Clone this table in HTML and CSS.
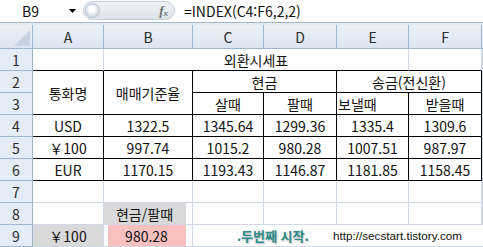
FILE: index.html
```html
<!DOCTYPE html>
<html lang="ko">
<head>
<meta charset="utf-8">
<link rel="stylesheet" href="styles.css">
</head>
<body>
<div class="fbar">
  <div class="namebox">
    <span class="ref">B9</span>
    <svg class="caret" width="7" height="4" viewBox="0 0 7 4"><path d="M0 0H7L3.5 4Z" fill="#000"/></svg>
  </div>
  <div class="pill">
    <span class="knob"></span>
    <span class="fx">f<sub>x</sub></span>
  </div>
  <div class="formula">=INDEX(C4:F6,2,2)</div>
</div>
<div class="strip"></div>
<div class="sheet">
  <div class="c ch corner"><svg width="16" height="16" viewBox="0 0 16 16"><path d="M16 0V16H0Z" fill="#c7d3e2"/></svg></div>
  <div class="c ch">A</div>
  <div class="c ch">B</div>
  <div class="c ch">C</div>
  <div class="c ch">D</div>
  <div class="c ch">E</div>
  <div class="c ch">F</div>
  <div class="c ch last"></div>

  <div class="c rh">1</div>
  <div class="c bb"></div>
  <div class="c bb span4">외환시세표</div>
  <div class="c bb"></div>
  <div class="c"></div>

  <div class="c rh">2</div>
  <div class="c t rows2">통화명</div>
  <div class="c t rows2">매매기준율</div>
  <div class="c t span2">현금</div>
  <div class="c t span2">송금(전신환)</div>
  <div class="c"></div>

  <div class="c rh">3</div>
  <div class="c t">살때</div>
  <div class="c t">팔때</div>
  <div class="c t left">보낼때</div>
  <div class="c t">받을때</div>
  <div class="c"></div>

  <div class="c rh">4</div>
  <div class="c t">USD</div>
  <div class="c t">1322.5</div>
  <div class="c t">1345.64</div>
  <div class="c t">1299.36</div>
  <div class="c t">1335.4</div>
  <div class="c t">1309.6</div>
  <div class="c"></div>

  <div class="c rh">5</div>
  <div class="c t">￥100</div>
  <div class="c t">997.74</div>
  <div class="c t">1015.2</div>
  <div class="c t">980.28</div>
  <div class="c t">1007.51</div>
  <div class="c t">987.97</div>
  <div class="c"></div>

  <div class="c rh">6</div>
  <div class="c t">EUR</div>
  <div class="c t">1170.15</div>
  <div class="c t">1193.43</div>
  <div class="c t">1146.87</div>
  <div class="c t">1181.85</div>
  <div class="c t">1158.45</div>
  <div class="c"></div>

  <div class="c rh">7</div>
  <div class="c"></div>
  <div class="c"></div>
  <div class="c"></div>
  <div class="c"></div>
  <div class="c"></div>
  <div class="c"></div>
  <div class="c"></div>

  <div class="c rh">8</div>
  <div class="c"></div>
  <div class="c label">현금/팔때</div>
  <div class="c"></div>
  <div class="c"></div>
  <div class="c"></div>
  <div class="c"></div>
  <div class="c"></div>

  <div class="c rh">9</div>
  <div class="c grayfill">￥100</div>
  <div class="c result">980.28</div>
  <div class="c mark">
    <span class="dot">.</span><span class="brand">두번째 시작.</span><span class="url">http://secstart.tistory.com</span>
  </div>
</div>
</body>
</html>
```
FILE: styles.css
```css
html, body {
  margin: 0;
  padding: 0;
}
body {
  width: 483px;
  height: 247px;
  overflow: hidden;
  background: #fff;
  font-family: "Noto Sans CJK KR", "Noto Sans", sans-serif;
  font-size: 14px;
  color: #111;
}
.fbar {
  display: flex;
  height: 22px;
  border-bottom: 1px solid #a7b8cc;
  background: #fff;
}
.namebox {
  width: 83px;
  display: flex;
  align-items: center;
  box-sizing: border-box;
  padding-left: 22px;
  padding-right: 7px;
}
.ref {
  line-height: 1;
}
.caret {
  margin-left: auto;
}
.pill {
  width: 92px;
  height: 19px;
  margin-top: 1px;
  box-sizing: border-box;
  border: 1px solid #c3cedb;
  border-radius: 10px;
  background: linear-gradient(#f1f4f8, #dbe2ea);
  display: flex;
  align-items: center;
  justify-content: space-between;
  padding: 0 6px 0 1px;
}
.knob {
  width: 15px;
  height: 15px;
  border-radius: 50%;
  background: radial-gradient(circle at 45% 40%, #ffffff 0 25%, #cfd7e1 70%, #b9c4d1 100%);
  border: 1px solid #b6c1ce;
  box-sizing: border-box;
}
.fx {
  font-family: "Liberation Serif", serif;
  font-style: italic;
  font-weight: bold;
  font-size: 13px;
  color: #6b6f75;
  line-height: 1;
}
.fx sub {
  font-size: 9px;
  vertical-align: -1px;
}
.formula {
  flex: 1;
  display: flex;
  align-items: center;
  padding-left: 9px;
  line-height: 1;
}
.strip {
  height: 2px;
  background: #e4eaf2;
}
.sheet {
  display: grid;
  grid-template-columns: 33px 71px 89px 71px 73px 72px 73px 1fr;
  grid-template-rows: 24px repeat(9, 22px);
}
.c {
  box-sizing: border-box;
  border-right: 1px solid #d0d7e5;
  border-bottom: 1px solid #d0d7e5;
  display: flex;
  align-items: center;
  justify-content: center;
  white-space: nowrap;
  line-height: 1;
  min-width: 0;
  overflow: visible;
}
.ch {
  background: linear-gradient(#eaf0f8, #dbe5f1);
  border-right-color: #9eb6ce;
  border-bottom-color: #9eb6ce;
  color: #2b2b2b;
}
.ch.last {
  border-right: none;
}
.corner {
  justify-content: flex-end;
  align-items: flex-end;
  padding: 0 2px 2px 0;
}
.rh {
  background: #e4ecf7;
  border-right-color: #9eb6ce;
  border-bottom-color: #9eb6ce;
  color: #2b2b2b;
}
.bb {
  border-bottom-color: #000;
}
.span4 {
  grid-column: span 4;
}
.span2 {
  grid-column: span 2;
}
.rows2 {
  grid-row: span 2;
}
.t {
  border-right-color: #000;
  border-bottom-color: #000;
}
.left {
  justify-content: flex-start;
  padding-left: 1px;
}
.label {
  background: linear-gradient(to right, #d9d9d9 82px, #fff 82px);
  padding-right: 7px;
}
.grayfill {
  background: #d9d9d9;
}
.result {
  background: linear-gradient(to right, #fff 4px, #f8c1c0 4px, #f8c1c0 82px, #fff 82px);
  padding-right: 3px;
}
.mark {
  grid-column: 4 / -1;
  border-right: none;
  justify-content: flex-start;
  padding-left: 44px;
  background: #fff;
}
.dot {
  color: #2e8b8b;
  font-weight: bold;
  font-size: 13px;
  width: 4px;
}
.brand {
  color: #2e8b8b;
  font-weight: bold;
  font-size: 13px;
  text-shadow: 1px 1px 2px rgba(0, 0, 0, 0.3);
  width: 92px;
}
.url {
  font-family: "Liberation Sans", Arial, sans-serif;
  font-size: 11.7px;
  color: #111;
}
```
